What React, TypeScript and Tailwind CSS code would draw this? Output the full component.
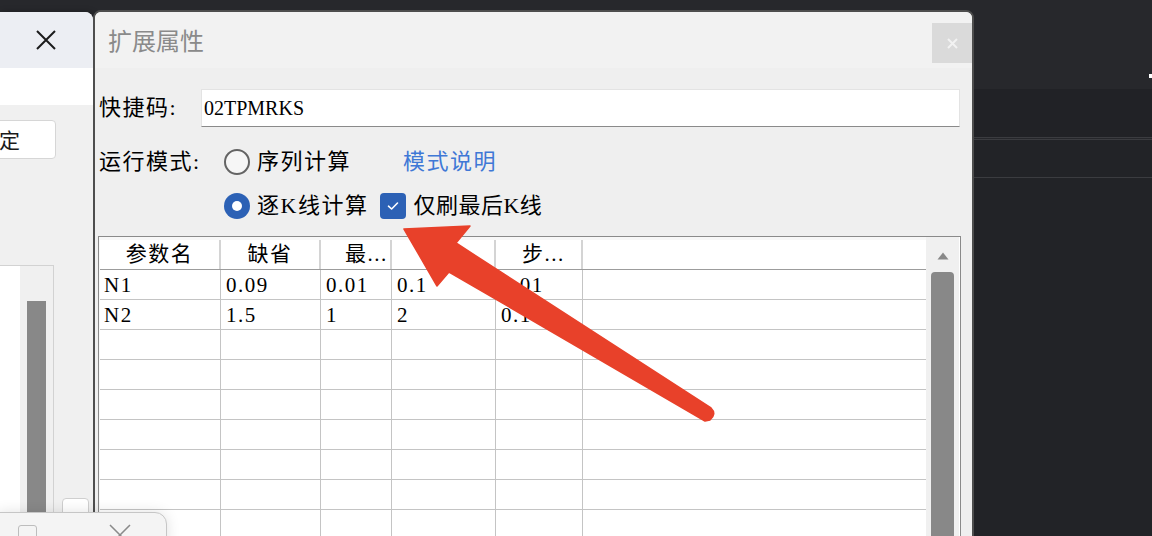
import React from "react";

const LBL = "font-['Liberation_Serif','Noto_Sans_CJK_SC',serif]";
const CJK = "font-['Noto_Sans_CJK_SC',sans-serif]";

function Radio({ checked }: { checked: boolean }) {
  if (checked) {
    return (
      <div className="w-[26px] h-[26px] rounded-full bg-[#2c61b5] flex items-center justify-center shrink-0">
        <div className="w-[10px] h-[10px] rounded-full bg-white" />
      </div>
    );
  }
  return <div className="w-[26px] h-[26px] rounded-full border-2 border-[#646464] bg-[#f6f6f6] shrink-0" />;
}

function Checkbox() {
  return (
    <div className="w-[26px] h-[26px] rounded-[4px] bg-[#2c61b5] flex items-center justify-center shrink-0">
      <svg width="14" height="14" viewBox="0 0 14 14" fill="none">
        <path d="M2.5 7.2 L5.6 10 L11.5 4" stroke="white" strokeWidth="1.6" strokeLinecap="round" strokeLinejoin="round" />
      </svg>
    </div>
  );
}

const colW = ["w-[121px]", "w-[100px]", "w-[71px]", "w-[104px]", "w-[87px]"];

const headers: { text: string; cls: string }[] = [
  { text: "参数名", cls: "justify-center" },
  { text: "缺省", cls: "justify-center" },
  { text: "最...", cls: "pl-[24px]" },
  { text: "最...", cls: "justify-center" },
  { text: "步...", cls: "pl-[26px]" },
];

const data: string[][] = [
  ["N1", "0.09", "0.01", "0.1", "0.01"],
  ["N2", "1.5", "1", "2", "0.1"],
  ["", "", "", "", ""],
  ["", "", "", "", ""],
  ["", "", "", "", ""],
  ["", "", "", "", ""],
  ["", "", "", "", ""],
  ["", "", "", "", ""],
  ["", "", "", "", ""],
  ["", "", "", "", ""],
];

export default function App() {
  return (
    <div className="relative w-[1152px] h-[536px] overflow-hidden bg-[#252629]">
      {/* background app */}
      <div className="absolute inset-0 flex flex-col">
        <div className="h-[89px] shrink-0 bg-[#27282c]" />
        <div className="h-[48px] shrink-0 bg-[#212226]" />
        <div className="h-[3px] shrink-0 border-y border-[#3b3c40] bg-[#26272b]" />
        <div className="h-[37px] shrink-0 bg-[#222327]" />
        <div className="h-[1px] shrink-0 bg-[#3b3c40]" />
        <div className="flex-1 bg-[#222327]" />
      </div>
      <div className="absolute left-[1149px] top-[74px] w-[3px] h-[4px] bg-white" />

      {/* left window behind */}
      <div className="absolute left-0 top-[12px] w-[93px] h-[540px] rounded-tr-[8px] overflow-hidden flex flex-col bg-[#f0f0f0] shadow-[2px_0_6px_rgba(0,0,0,0.25)]">
        <div className="h-[56px] shrink-0 bg-[#eceef3] flex items-center pl-[36px]">
          <svg width="20" height="20" viewBox="0 0 20 20">
            <path d="M1 1 L19 19 M19 1 L1 19" stroke="#1b1b1b" strokeWidth="2" />
          </svg>
        </div>
        <div className="h-[37px] shrink-0 bg-white" />
        <div className="flex-1 min-h-0 flex flex-col">
          <div className="shrink-0 mt-[15px] ml-[-6px] w-[62px] h-[39px] bg-white border border-[#d6d6d6] rounded-[4px] flex items-center overflow-hidden">
            <span className={`ml-[4px] text-[21px] leading-none text-[#1a1a1a] ${CJK}`}>定</span>
          </div>
          <div className="flex flex-1 min-h-0 mt-[106px]">
            <div className="w-[54px] border-t border-r border-[#d2d2d2] flex">
              <div className="w-[20px] bg-white" />
              <div className="flex-1 bg-[#f0f0f0] pt-[35px] pl-[7px] flex flex-col">
                <div className="w-[19px] flex-1 bg-[#888888]" />
              </div>
            </div>
            <div className="ml-[8px] mt-[233px] w-[27px] h-[24px] border border-[#cfcfcf] rounded-[4px] bg-white" />
          </div>
        </div>
      </div>

      {/* main dialog */}
      <div className="absolute left-[93px] top-[10px] w-[881px] h-[540px] border-2 border-[#4e4e4e] rounded-t-[8px] overflow-hidden flex flex-col bg-[#efefef]">
        <div className="h-[56px] bg-[#f2f2f2] flex justify-between shrink-0">
          <div className={`pl-[13px] self-center text-[24px] leading-none text-[#8a8a8a] ${CJK}`}>扩展属性</div>
          <div className="mt-[11px] w-[40px] h-[40px] bg-[#dadada] flex items-center justify-center">
            <svg width="11" height="11" viewBox="0 0 11 11">
              <path d="M1 1 L10 10 M10 1 L1 10" stroke="#f2f2f2" strokeWidth="2" />
            </svg>
          </div>
        </div>

        <div className="flex-1 flex flex-col min-h-0">
          {/* row 1 */}
          <div className="flex items-center mt-[21px] pl-[4px] pr-[12px] shrink-0">
            <span className={`w-[102px] text-[22px] leading-none tracking-[1.5px] text-black ${LBL}`}>快捷码:</span>
            <div className={`flex-1 h-[38px] bg-white border border-[#e3e3e3] border-b-[#8a8a8a] flex items-center pl-[2px] text-[20px] text-black ${LBL}`}>
              02TPMRKS
            </div>
          </div>

          {/* row 2 */}
          <div className={`shrink-0 flex items-center mt-[22px] pl-[4px] h-[26px] text-[22px] leading-none tracking-[1.5px] text-black ${LBL}`}>
            <span className="w-[125px]">运行模式:</span>
            <Radio checked={false} />
            <span className="ml-[7px]">序列计算</span>
            <span className="ml-[52px] text-[#3f78d6]">模式说明</span>
          </div>

          {/* row 3 */}
          <div className={`shrink-0 flex items-center mt-[18px] pl-[129px] h-[26px] text-[22px] leading-none tracking-[1.5px] text-black ${LBL}`}>
            <Radio checked={true} />
            <span className="ml-[7px]">逐K线计算</span>
            <div className="ml-[12px]">
              <Checkbox />
            </div>
            <span className="ml-[7px] tracking-[0.5px]">仅刷最后K线</span>
          </div>

          {/* table */}
          <div className="mt-[17px] ml-[3px] mr-[11px] flex-1 min-h-0 border border-[#8a8a8a] bg-white flex overflow-hidden">
            <div className="w-[827px] pl-[1px] pt-[3px] flex flex-col bg-[#f7f7f7]">
              <div className={`flex h-[30px] shrink-0 bg-white border-b border-[#9c9c9c] text-[21px] leading-none tracking-[1.5px] text-black ${LBL}`}>
                {headers.map((h, i) => (
                  <div key={i} className={`${colW[i]} flex items-center border-r-2 border-[#d4d4d4] ${h.cls}`}>
                    {h.text}
                  </div>
                ))}
                <div className="flex-1" />
              </div>
              {data.map((r, ri) => (
                <div key={ri} className={`flex h-[30px] shrink-0 bg-white border-b border-[#c4c4c4] text-[21px] leading-none tracking-[1.5px] text-black ${LBL}`}>
                  {r.map((c, ci) => (
                    <div key={ci} className={`${colW[ci]} flex items-center pt-[2px] border-r border-[#c4c4c4] ${ci === 0 ? "pl-[4px]" : "pl-[5px]"}`}>
                      {c}
                    </div>
                  ))}
                  <div className="flex-1" />
                </div>
              ))}
            </div>
            <div className="w-[33px] mr-[1px] bg-[#f0f0f0] flex flex-col items-center">
              <svg className="mt-[15px]" width="12" height="8" viewBox="0 0 12 8">
                <path d="M6 0.5 L11.5 7.5 L0.5 7.5 Z" fill="#888888" />
              </svg>
              <div className="mt-[12px] w-[23px] flex-1 rounded-t-[4px] bg-[#888888]" />
            </div>
          </div>
        </div>
      </div>

      {/* bottom floating window */}
      <div className="absolute left-[-2px] top-[512px] w-[169px] h-[40px] bg-[#f4f4f4] border border-[#c6c6c6] rounded-tr-[12px] shadow-[0_0_14px_rgba(0,0,0,0.12)] flex items-start pt-[12px]">
        <div className="ml-[19px] w-[19px] h-[19px] border border-[#bdbdbd] rounded-[3px]" />
        <svg className="ml-[72px] -mt-[1px]" width="22" height="22" viewBox="0 0 22 22">
          <path d="M1 1 L21 21 M21 1 L1 21" stroke="#8a8a8a" strokeWidth="1.5" />
        </svg>
      </div>

      {/* red annotation arrow */}
      <svg className="absolute inset-0 pointer-events-none" width="1152" height="536" viewBox="0 0 1152 536">
        <path
          d="M404 229 L470 226 L456 243 L711 408 Q717 414 710 420 L705 421 L449 272 L437 286 Z"
          fill="#e8412a"
          stroke="#e8412a"
          strokeWidth="1.5"
          strokeLinejoin="round"
        />
      </svg>
    </div>
  );
}
